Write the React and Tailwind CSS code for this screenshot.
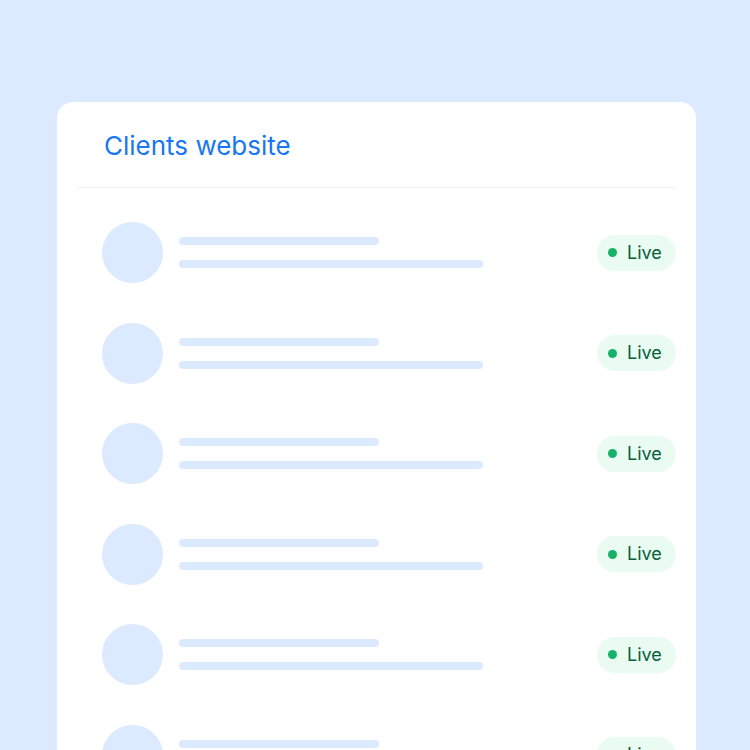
export default function App() {
  const rows = [0, 1, 2, 3, 4, 5];
  return (
    <div
      className="w-[750px] h-[750px] overflow-hidden bg-[#dbeafe] pt-[102px] pl-[57px]"
      style={{ fontFamily: "Inter, 'Noto Sans', sans-serif" }}
    >
      <div className="w-[639px] h-[700px] bg-white rounded-t-[16px] overflow-hidden">
        <div className="h-[85px] flex items-center pl-[47px] pt-[3px]">
          <h1 className="text-[26px] leading-[32px] font-normal text-[#1877f2]">
            Clients website
          </h1>
        </div>
        <div className="h-px bg-[#eef0f3] ml-[21px] mr-[20px]" />
        <div className="flex flex-col gap-[39.5px] pt-[34px] pl-[45px] pr-[20px]">
          {rows.map((r) => (
            <div key={r} className="flex items-center h-[61px]">
              <div className="w-[61px] h-[61px] rounded-full bg-[#dbeafe] shrink-0" />
              <div className="flex flex-col gap-[15px] ml-[16px]">
                <div className="w-[200px] h-[8px] rounded-full bg-[#dbeafe]" />
                <div className="w-[304px] h-[8px] rounded-full bg-[#dbeafe]" />
              </div>
              <div className="ml-auto flex items-center h-[36px] w-[79px] rounded-full bg-[#eafbf1] pl-[11px]">
                <span className="w-[9px] h-[9px] rounded-full bg-[#17b26a]" />
                <span className="ml-[10px] text-[18px] leading-none font-normal text-[#05603a]">
                  Live
                </span>
              </div>
            </div>
          ))}
        </div>
      </div>
    </div>
  );
}
